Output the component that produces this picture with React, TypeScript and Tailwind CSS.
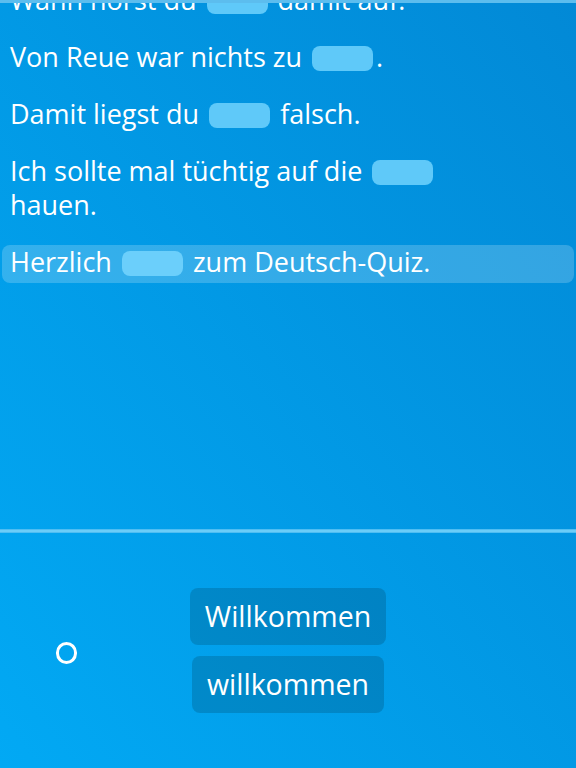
const sentences: { parts: string[]; active?: boolean }[] = [
  { parts: ['Wann hörst du', 'damit auf.'] },
  { parts: ['Von Reue war nichts zu', '.'] },
  { parts: ['Damit liegst du', 'falsch.'] },
  { parts: ['Ich sollte mal tüchtig auf die', 'hauen.'] },
  { parts: ['Herzlich', 'zum Deutsch-Quiz.'], active: true },
];

const Blank = ({ active }: { active?: boolean }) => (
  <span
    className={`inline-block w-[61px] h-[25px] rounded-[8px] mx-[3px] align-[-4px] ${
      active ? 'bg-[#6bcffb]' : 'bg-[#5fc9f9]'
    }`}
  />
);

export default function App() {
  return (
    <div
      className="relative w-full h-[768px] overflow-hidden flex flex-col bg-gradient-to-tr from-[#02a9f4] to-[#0289d6] text-white text-[27px] leading-[34px]"
      style={{ fontFamily: '"Open Sans", "Noto Sans", sans-serif' }}
    >
      {/* top edge of the list pane */}
      <div className="absolute top-0 inset-x-0 h-[3px] bg-[#5cbdee] z-10" />

      {/* sentence list (scrolled) */}
      <div className="h-[529px] overflow-hidden">
        <div className="flex flex-col gap-[19px] mt-[-17px]">
          {sentences.map((s, i) => {
            const punct = s.parts[1].startsWith('.');
            return (
              <div
                key={i}
                className={`mx-[2px] px-[8px] pb-[4px] rounded-lg ${s.active ? 'bg-white/20' : ''}`}
              >
                <div className="max-w-[470px]">
                  {s.parts[0]} <Blank active={s.active} />
                  {punct ? '' : ' '}
                  {s.parts[1]}
                </div>
              </div>
            );
          })}
        </div>
      </div>

      {/* divider */}
      <div className="h-[4px] bg-[#6ccdf8] border-y border-[#4fbdf2]" />

      {/* answer choices */}
      <div className="flex-1 grid grid-cols-[1fr_auto_1fr] items-center">
        <div className="pl-[56px] pt-[5px]">
          <div className="w-[21px] h-[22px] rounded-full border-[3px] border-white" />
        </div>
        <div className="flex flex-col items-center gap-[11px] text-[28.5px]">
          <button className="px-[15px] pt-[11px] pb-[12px] rounded-[8px] bg-black/15 text-white">
            Willkommen
          </button>
          <button className="px-[15px] pt-[11px] pb-[12px] rounded-[8px] bg-black/15 text-white">
            willkommen
          </button>
        </div>
        <div />
      </div>
    </div>
  );
}
